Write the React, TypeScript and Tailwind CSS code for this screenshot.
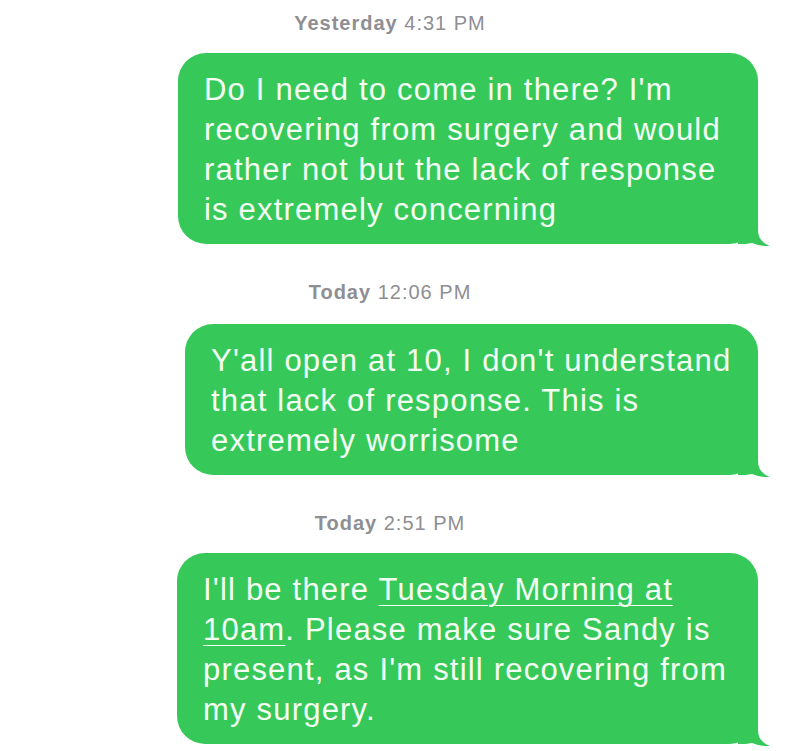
import React from 'react';

const font = { fontFamily: '"Liberation Sans", Arial, sans-serif' };

function Stamp({ day, time }: { day: string; time: string }) {
  return (
    <div className="w-[780px] text-center text-[20px] leading-[20px] tracking-[1px] text-[#8e8e93]">
      <span className="font-bold">{day}</span> {time}
    </div>
  );
}

function Tail() {
  return (
    <svg
      className="absolute right-[-12px] bottom-[-2px]"
      width="32"
      height="30"
      viewBox="0 0 32 30"
    >
      <path
        d="M0 0 H20 V14 C20 22 24 27 32 30 C26 30.5 20 29.5 14 27 C10 28 5 28 0 28 Z"
        fill="#36c95a"
      />
    </svg>
  );
}

function Bubble({ width, children }: { width: string; children: React.ReactNode }) {
  return (
    <div className="flex justify-end w-[758px]">
      <div
        className={`relative ${width} rounded-[28px] bg-[#36c95a] px-[26px] pt-[17px] pb-[14px] text-[31px] leading-[40px] tracking-[1.2px] text-[#f4fff4]`}
      >
        {children}
        <Tail />
      </div>
    </div>
  );
}

export default function App() {
  return (
    <div className="w-[800px] h-[751px] bg-white overflow-hidden pt-[13px]" style={font}>
      {/* YESTERDAY */}
      <Stamp day="Yesterday" time="4:31 PM" />
      <div className="mt-[20px]">
        <Bubble width="w-[580px]">
          <div>Do I need to come in there? I'm</div>
          <div>recovering from surgery and would</div>
          <div>rather not but the lack of response</div>
          <div>is extremely concerning</div>
        </Bubble>
      </div>

      {/* TODAY 12:06 */}
      <div className="mt-[38px]">
        <Stamp day="Today" time="12:06 PM" />
      </div>
      <div className="mt-[22px]">
        <Bubble width="w-[573px]">
          <div>Y'all open at 10, I don't understand</div>
          <div>that lack of response. This is</div>
          <div>extremely worrisome</div>
        </Bubble>
      </div>

      {/* TODAY 2:51 */}
      <div className="mt-[38px]">
        <Stamp day="Today" time="2:51 PM" />
      </div>
      <div className="mt-[20px]">
        <Bubble width="w-[581px]">
          <div>
            I'll be there <span className="underline decoration-1 underline-offset-[5px]">Tuesday Morning at</span>
          </div>
          <div>
            <span className="underline decoration-1 underline-offset-[5px]">10am</span>. Please make sure Sandy is
          </div>
          <div>present, as I'm still recovering from</div>
          <div>my surgery.</div>
        </Bubble>
      </div>
    </div>
  );
}
